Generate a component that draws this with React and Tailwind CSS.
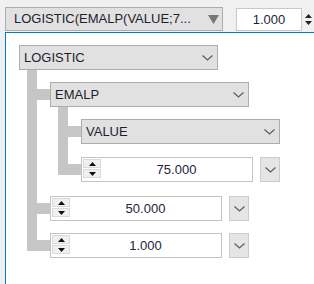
import React from 'react';

const tree = {
  kind: 'combo',
  label: 'LOGISTIC',
  children: [
    {
      kind: 'combo',
      label: 'EMALP',
      gap: 'pt-[12px]',
      children: [
        { kind: 'combo', label: 'VALUE', gap: 'pt-[12px]' },
        { kind: 'num', value: '75.000', gap: 'pt-[13px]' },
      ],
    },
    { kind: 'num', value: '50.000', gap: 'pt-[14px]' },
    { kind: 'num', value: '1.000', gap: 'pt-[12px]' },
  ],
};

function Chevron({ className }) {
  return (
    <svg width="11" height="6" viewBox="0 0 11 6" className={className}>
      <path d="M0.5 0.5 L5.5 5 L10.5 0.5" fill="none" stroke="#5f5f5f" strokeWidth="1.3" />
    </svg>
  );
}

function Spin() {
  return (
    <div className="flex flex-col gap-px w-[18px] mt-[1px] ml-[1px]">
      <div className="h-[9px] bg-[#f0f0f0] border border-[#dadada] flex items-center justify-center">
        <svg width="7" height="4" viewBox="0 0 7 4"><path d="M0 4 L3.5 0 L7 4 Z" fill="#111" /></svg>
      </div>
      <div className="h-[9px] bg-[#f0f0f0] border border-[#dadada] flex items-center justify-center">
        <svg width="7" height="4" viewBox="0 0 7 4"><path d="M0 0 L7 0 L3.5 4 Z" fill="#111" /></svg>
      </div>
    </div>
  );
}

function Combo({ label }) {
  return (
    <div className="w-[199px] h-[25px] bg-[#e1e1e1] border border-[#adadad] flex items-center justify-between pl-[4px] pr-[4px] text-[13px] text-[#1e1e2e]">
      <span>{label}</span>
      <Chevron />
    </div>
  );
}

function NumBox({ value }) {
  return (
    <div className="w-[199px] h-[25px] flex items-center gap-[7px]">
      <div className="w-[172px] h-[25px] bg-white border border-[#c4c4c4] flex items-start">
        <Spin />
        <div className="flex-1 h-full flex items-center justify-center text-[13px] text-[#1e1e3a]">{value}</div>
      </div>
      <div className="w-[20px] h-[25px] bg-[#e5e5e5] border border-[#cccccc] flex items-center justify-center">
        <Chevron />
      </div>
    </div>
  );
}

function Node({ node }) {
  return (
    <div className="flex flex-col">
      {node.kind === 'combo' ? <Combo label={node.label} /> : <NumBox value={node.value} />}
      {node.children && (
        <div className="flex">
          <div className="ml-[8px] w-[10px] flex flex-col">
            <div className="flex-1 bg-[#c6c6c6]" />
            <div className="h-[7px]" />
          </div>
          <div className="flex flex-col">
            {node.children.map((c, i) => (
              <div key={i} className={`flex items-start ${c.gap}`}>
                <div className="w-[13px] h-[11px] mt-[7px] bg-[#c6c6c6]" />
                <Node node={c} />
              </div>
            ))}
          </div>
        </div>
      )}
    </div>
  );
}

export default function App() {
  return (
    <div
      className="w-[314px] h-[284px] bg-[#f0f0f0] flex flex-col overflow-hidden"
      style={{ fontFamily: '"Liberation Sans", Arial, sans-serif' }}
    >
      <div className="h-[32px] flex items-start pt-[7px] pl-[5px] gap-[13px] shrink-0">
        <div className="w-[218px] h-[24px] bg-[#e1e1e1] border border-[#adadad] flex items-center justify-between pl-[8px] pr-[3px] text-[13px] text-[#1e1e2e]">
          <span>LOGISTIC(EMALP(VALUE;7...</span>
          <svg width="11" height="9" viewBox="0 0 11 9"><path d="M0 0 L11 0 L5.5 9 Z" fill="#777" /></svg>
        </div>
        <div className="flex items-start mt-[1px]">
          <div className="w-[66px] h-[23px] bg-white border border-[#c8c8c8] flex items-center justify-center text-[13px] text-[#1e1e3a]">
            1.000
          </div>
          <div className="w-[11px] h-[23px] ml-[1px] bg-[#f0f0f0] flex flex-col items-center justify-center gap-[3px]">
            <svg width="7" height="4" viewBox="0 0 7 4"><path d="M0 4 L3.5 0 L7 4 Z" fill="#222" /></svg>
            <svg width="7" height="4" viewBox="0 0 7 4"><path d="M0 0 L7 0 L3.5 4 Z" fill="#222" /></svg>
          </div>
        </div>
      </div>
      <div className="flex-1 ml-[5px] bg-white border-t border-l border-[#0078d7] pl-[13px] pt-[12px]">
        <Node node={tree} />
      </div>
    </div>
  );
}
